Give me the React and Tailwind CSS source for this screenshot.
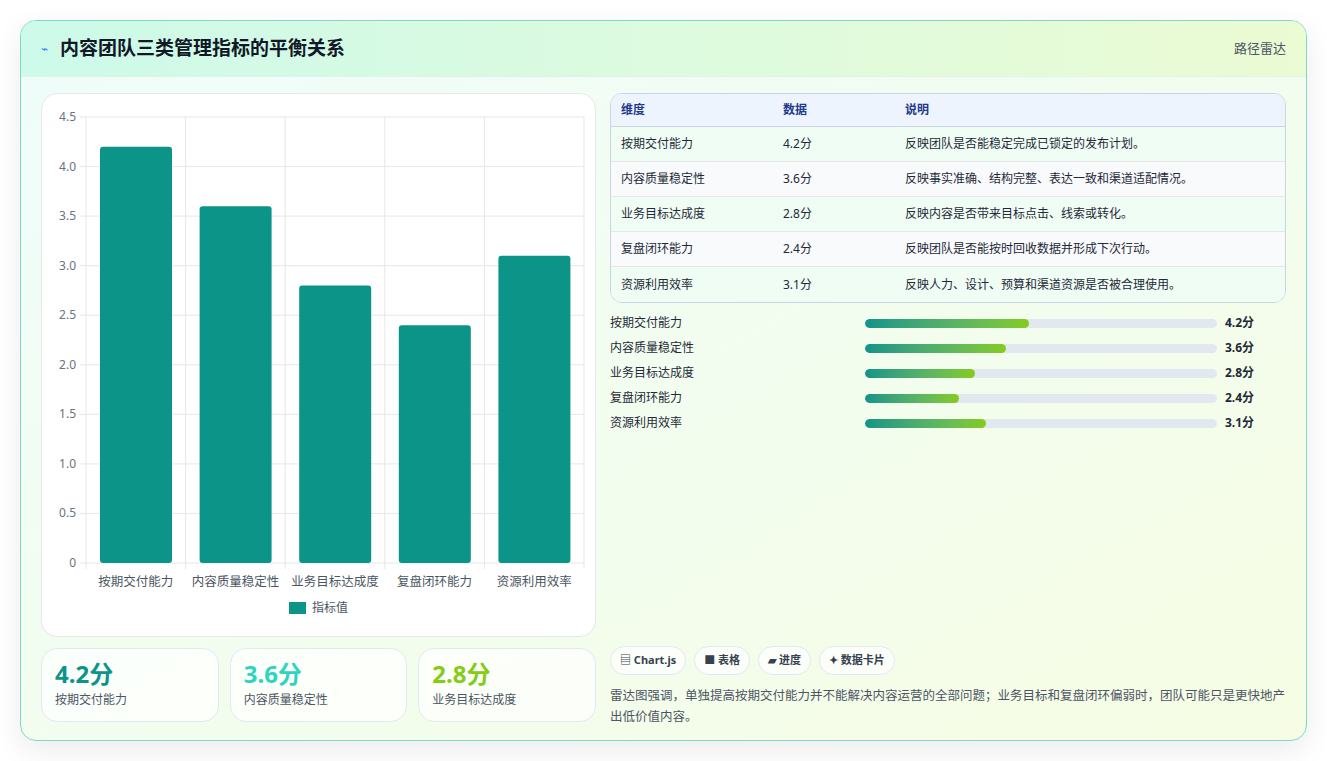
const data = [
  { name: "按期交付能力", v: 4.2, desc: "反映团队是否能稳定完成已锁定的发布计划。" },
  { name: "内容质量稳定性", v: 3.6, desc: "反映事实准确、结构完整、表达一致和渠道适配情况。" },
  { name: "业务目标达成度", v: 2.8, desc: "反映内容是否带来目标点击、线索或转化。" },
  { name: "复盘闭环能力", v: 2.4, desc: "反映团队是否能按时回收数据并形成下次行动。" },
  { name: "资源利用效率", v: 3.1, desc: "反映人力、设计、预算和渠道资源是否被合理使用。" },
];

const font = { fontFamily: '"Noto Sans", "Noto Sans CJK SC", sans-serif' };

const Chart = () => {
  // plot area in svg coords
  const x0 = 44, x1 = 542, y0 = 469, yTop = 23;
  const unit = (y0 - yTop) / 4.5;
  const cw = (x1 - x0) / 5;
  const ticks = [0, 0.5, 1, 1.5, 2, 2.5, 3, 3.5, 4, 4.5];
  return (
    <svg width="555" height="544" className="block">
      {ticks.map((t) => (
        <g key={t}>
          <line x1={x0 - 6} x2={x1} y1={y0 - t * unit} y2={y0 - t * unit} stroke="#e5e7eb" />
          <text x={x0 - 10} y={y0 - t * unit + 4} textAnchor="end" fontSize="12" fill="#6b7280">
            {t === 0 ? "0" : t.toFixed(1)}
          </text>
        </g>
      ))}
      {[0, 1, 2, 3, 4, 5].map((i) => (
        <line key={i} x1={x0 + i * cw} x2={x0 + i * cw} y1={yTop} y2={y0 + 6} stroke="#e5e7eb" />
      ))}
      {data.map((d, i) => (
        <g key={d.name}>
          <rect x={x0 + i * cw + 14} y={y0 - d.v * unit} width={72} height={d.v * unit} rx="3" fill="#0d9488" />
          <text x={x0 + i * cw + cw / 2} y={y0 + 23} textAnchor="middle" fontSize="12.5" fill="#4b5563">
            {d.name}
          </text>
        </g>
      ))}
      <rect x="247" y="508" width="17" height="12" fill="#0d9488" />
      <text x="270" y="518" fontSize="12" fill="#4b5563">指标值</text>
    </svg>
  );
};

export default function App() {
  return (
    <div className="min-h-screen bg-white p-5" style={font}>
      <div className="rounded-2xl border border-[#7dd9c4] overflow-hidden shadow-[0_10px_30px_rgba(0,0,0,0.08)] bg-gradient-to-br from-[#effdfb] to-[#f6fde4] h-[721px]">
        <div className="h-[56px] flex items-center justify-between px-5 bg-gradient-to-r from-[#cdfaea] to-[#ebfbd3] border-b border-[#dcf3e8]">
          <div className="flex items-center gap-3">
            <span className="text-[#3b82f6] text-xs">⌁</span>
            <span className="text-[19px] font-bold text-[#111827]">内容团队三类管理指标的平衡关系</span>
          </div>
          <span className="text-[13px] text-[#4b5563]">路径雷达</span>
        </div>
        <div className="flex gap-[14px] px-5 pt-4">
          <div className="w-[555px] flex flex-col gap-[11px]">
            <div className="bg-white rounded-2xl border border-[#e5e7eb] h-[544px] overflow-hidden">
              <Chart />
            </div>
            <div className="grid grid-cols-3 gap-[11px]">
              {[
                ["4.2分", "按期交付能力", "text-[#0d9488]"],
                ["3.6分", "内容质量稳定性", "text-[#2dd4bf]"],
                ["2.8分", "业务目标达成度", "text-[#84cc16]"],
              ].map(([v, l, c]) => (
                <div key={l} className="h-[74px] rounded-2xl border border-[#e2e8f0] bg-white/70 px-[13px] pt-[10px]">
                  <div className={`text-[24px] font-bold leading-[30px] ${c}`}>{v}</div>
                  <div className="text-[12px] text-[#4b5563] mt-[2px]">{l}</div>
                </div>
              ))}
            </div>
          </div>
          <div className="flex-1 flex flex-col">
            <div className="rounded-xl border border-[#cbd5e1] overflow-hidden bg-white/60">
              <div className="flex h-[33px] items-center bg-[#eef4fe] border-b border-[#cbd5e1] text-[12px] font-bold text-[#1e3a8a] px-[10px]">
                <div className="w-[162px]">维度</div>
                <div className="w-[122px]">数据</div>
                <div>说明</div>
              </div>
              {data.map((d, i) => (
                <div key={d.name} className={`flex h-[35px] items-center px-[10px] text-[12px] text-[#1f2937] ${i < 4 ? "border-b border-[#e5e7eb]" : ""} ${i % 2 ? "bg-[#f8fafc]" : "bg-[#f0fdf4]"}`}>
                  <div className="w-[162px]">{d.name}</div>
                  <div className="w-[122px]">{d.v}分</div>
                  <div>{d.desc}</div>
                </div>
              ))}
            </div>
            <div className="flex flex-col gap-[9px] mt-[12px]">
              {data.map((d) => (
                <div key={d.name} className="flex items-center h-[16px] text-[12px]">
                  <div className="w-[255px] text-[#1f2937]">{d.name}</div>
                  <div className="w-[352px] h-[9px] rounded-full bg-[#e2e8f0] overflow-hidden">
                    <div className="h-full rounded-full bg-gradient-to-r from-[#0d9488] to-[#84cc16]" style={{ width: `${(d.v / 9) * 100}%` }} />
                  </div>
                  <div className="ml-2 font-bold text-[#1f2937]">{d.v}分</div>
                </div>
              ))}
            </div>
            <div className="flex-1" />
            <div className="flex gap-[8px] mt-[215px]">
              {["▤ Chart.js", "■ 表格", "▰ 进度", "✦ 数据卡片"].map((t) => (
                <span key={t} className="h-[29px] px-[9px] rounded-full border border-[#e2e8f0] bg-white/70 flex items-center text-[11px] font-bold text-[#374151]">{t}</span>
              ))}
            </div>
            <p className="mt-[10px] text-[12.5px] leading-[21px] text-[#4b5563]">
              雷达图强调，单独提高按期交付能力并不能解决内容运营的全部问题；业务目标和复盘闭环偏弱时，团队可能只是更快地产出低价值内容。
            </p>
          </div>
        </div>
      </div>
    </div>
  );
}
